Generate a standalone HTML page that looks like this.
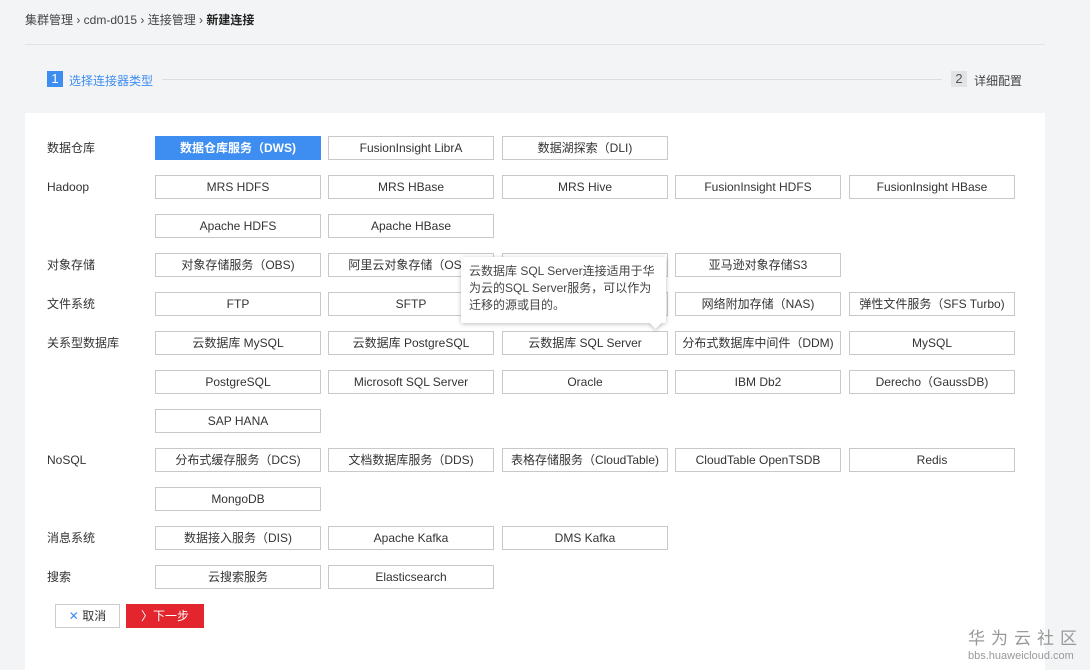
<!DOCTYPE html>
<html><head><meta charset="utf-8"><style>
body{margin:0;width:1090px;height:670px;background:#f3f4f6;font-family:"Liberation Sans","Noto Sans CJK SC",sans-serif;font-size:12px;color:#333;position:relative;overflow:hidden}
.a{position:absolute}
.b{position:absolute;width:164px;height:22px;border:1px solid #c8c8c8;background:#fff;box-sizing:content-box;text-align:center;line-height:22px;font-size:12px;color:#333;white-space:nowrap}
.l{position:absolute;left:47px;font-size:12px;color:#333;line-height:14px}
</style></head><body>
<div class="a" style="left:25px;top:11px;font-size:12px;color:#444">集群管理 › cdm-d015 › 连接管理 › <b style="color:#222">新建连接</b></div>
<div class="a" style="left:25px;top:44px;width:1020px;height:1px;background:#e2e3e5"></div>
<div class="a" style="left:47px;top:71px;width:16px;height:16px;background:#3d8ef0;color:#fff;font-size:13px;line-height:16px;text-align:center">1</div>
<div class="a" style="left:69px;top:72px;color:#3d8ef0">选择连接器类型</div>
<div class="a" style="left:162px;top:79px;width:780px;height:1px;background:#dcdde0"></div>
<div class="a" style="left:951px;top:71px;width:16px;height:16px;background:#e2e3e6;color:#555;font-size:13px;line-height:16px;text-align:center">2</div>
<div class="a" style="left:974px;top:72px;color:#444">详细配置</div>
<div class="a" style="left:25px;top:113px;width:1020px;height:557px;background:#fff"></div>

<div class="l" style="top:141px">数据仓库</div>
<div class="b" style="left:155px;top:136px;background:#3d8ef0;border-color:#3d8ef0;color:#fff;font-weight:600">数据仓库服务（DWS)</div>
<div class="b" style="left:328px;top:136px">FusionInsight LibrA</div>
<div class="b" style="left:502px;top:136px">数据湖探索（DLI)</div>

<div class="l" style="top:180px">Hadoop</div>
<div class="b" style="left:155px;top:175px">MRS HDFS</div>
<div class="b" style="left:328px;top:175px">MRS HBase</div>
<div class="b" style="left:502px;top:175px">MRS Hive</div>
<div class="b" style="left:675px;top:175px">FusionInsight HDFS</div>
<div class="b" style="left:849px;top:175px">FusionInsight HBase</div>
<div class="b" style="left:155px;top:214px">Apache HDFS</div>
<div class="b" style="left:328px;top:214px">Apache HBase</div>

<div class="l" style="top:258px">对象存储</div>
<div class="b" style="left:155px;top:253px">对象存储服务（OBS)</div>
<div class="b" style="left:328px;top:253px">阿里云对象存储（OSS)</div>
<div class="b" style="left:502px;top:253px"></div>
<div class="b" style="left:675px;top:253px">亚马逊对象存储S3</div>

<div class="l" style="top:297px">文件系统</div>
<div class="b" style="left:155px;top:292px">FTP</div>
<div class="b" style="left:328px;top:292px">SFTP</div>
<div class="b" style="left:502px;top:292px"></div>
<div class="b" style="left:675px;top:292px">网络附加存储（NAS)</div>
<div class="b" style="left:849px;top:292px">弹性文件服务（SFS Turbo)</div>

<div class="l" style="top:336px">关系型数据库</div>
<div class="b" style="left:155px;top:331px">云数据库 MySQL</div>
<div class="b" style="left:328px;top:331px">云数据库 PostgreSQL</div>
<div class="b" style="left:502px;top:331px">云数据库 SQL Server</div>
<div class="b" style="left:675px;top:331px">分布式数据库中间件（DDM)</div>
<div class="b" style="left:849px;top:331px">MySQL</div>
<div class="b" style="left:155px;top:370px">PostgreSQL</div>
<div class="b" style="left:328px;top:370px">Microsoft SQL Server</div>
<div class="b" style="left:502px;top:370px">Oracle</div>
<div class="b" style="left:675px;top:370px">IBM Db2</div>
<div class="b" style="left:849px;top:370px">Derecho（GaussDB)</div>
<div class="b" style="left:155px;top:409px">SAP HANA</div>

<div class="l" style="top:453px">NoSQL</div>
<div class="b" style="left:155px;top:448px">分布式缓存服务（DCS)</div>
<div class="b" style="left:328px;top:448px">文档数据库服务（DDS)</div>
<div class="b" style="left:502px;top:448px">表格存储服务（CloudTable)</div>
<div class="b" style="left:675px;top:448px">CloudTable OpenTSDB</div>
<div class="b" style="left:849px;top:448px">Redis</div>
<div class="b" style="left:155px;top:487px">MongoDB</div>

<div class="l" style="top:531px">消息系统</div>
<div class="b" style="left:155px;top:526px">数据接入服务（DIS)</div>
<div class="b" style="left:328px;top:526px">Apache Kafka</div>
<div class="b" style="left:502px;top:526px">DMS Kafka</div>

<div class="l" style="top:570px">搜索</div>
<div class="b" style="left:155px;top:565px">云搜索服务</div>
<div class="b" style="left:328px;top:565px">Elasticsearch</div>

<div class="a" style="left:461px;top:257px;width:205px;height:66px;background:#fff;box-shadow:0 1px 5px rgba(0,0,0,.25);border-radius:2px;padding:6px 8px;box-sizing:border-box;font-size:12px;line-height:17px;color:#444">云数据库 SQL Server连接适用于华为云的SQL Server服务，可以作为迁移的源或目的。</div>
<div class="a" style="left:651px;top:318px;width:9px;height:9px;background:#fff;transform:rotate(45deg);box-shadow:2px 2px 3px rgba(0,0,0,.15)"></div>

<div class="a" style="left:55px;top:604px;width:63px;height:22px;border:1px solid #ccc;background:#fff;line-height:22px;text-align:center;color:#333"><span style="color:#3d8ef0">✕</span> 取消</div>
<div class="a" style="left:126px;top:604px;width:78px;height:24px;background:#e3262e;color:#fff;line-height:24px;text-align:center">〉下一步</div>

<div class="a" style="left:968px;top:629px;font-size:17px;line-height:19px;letter-spacing:6px;color:#999">华为云社区</div>
<div class="a" style="left:968px;top:650px;font-size:11px;line-height:12px;color:#999">bbs.huaweicloud.com</div>
</body></html>
